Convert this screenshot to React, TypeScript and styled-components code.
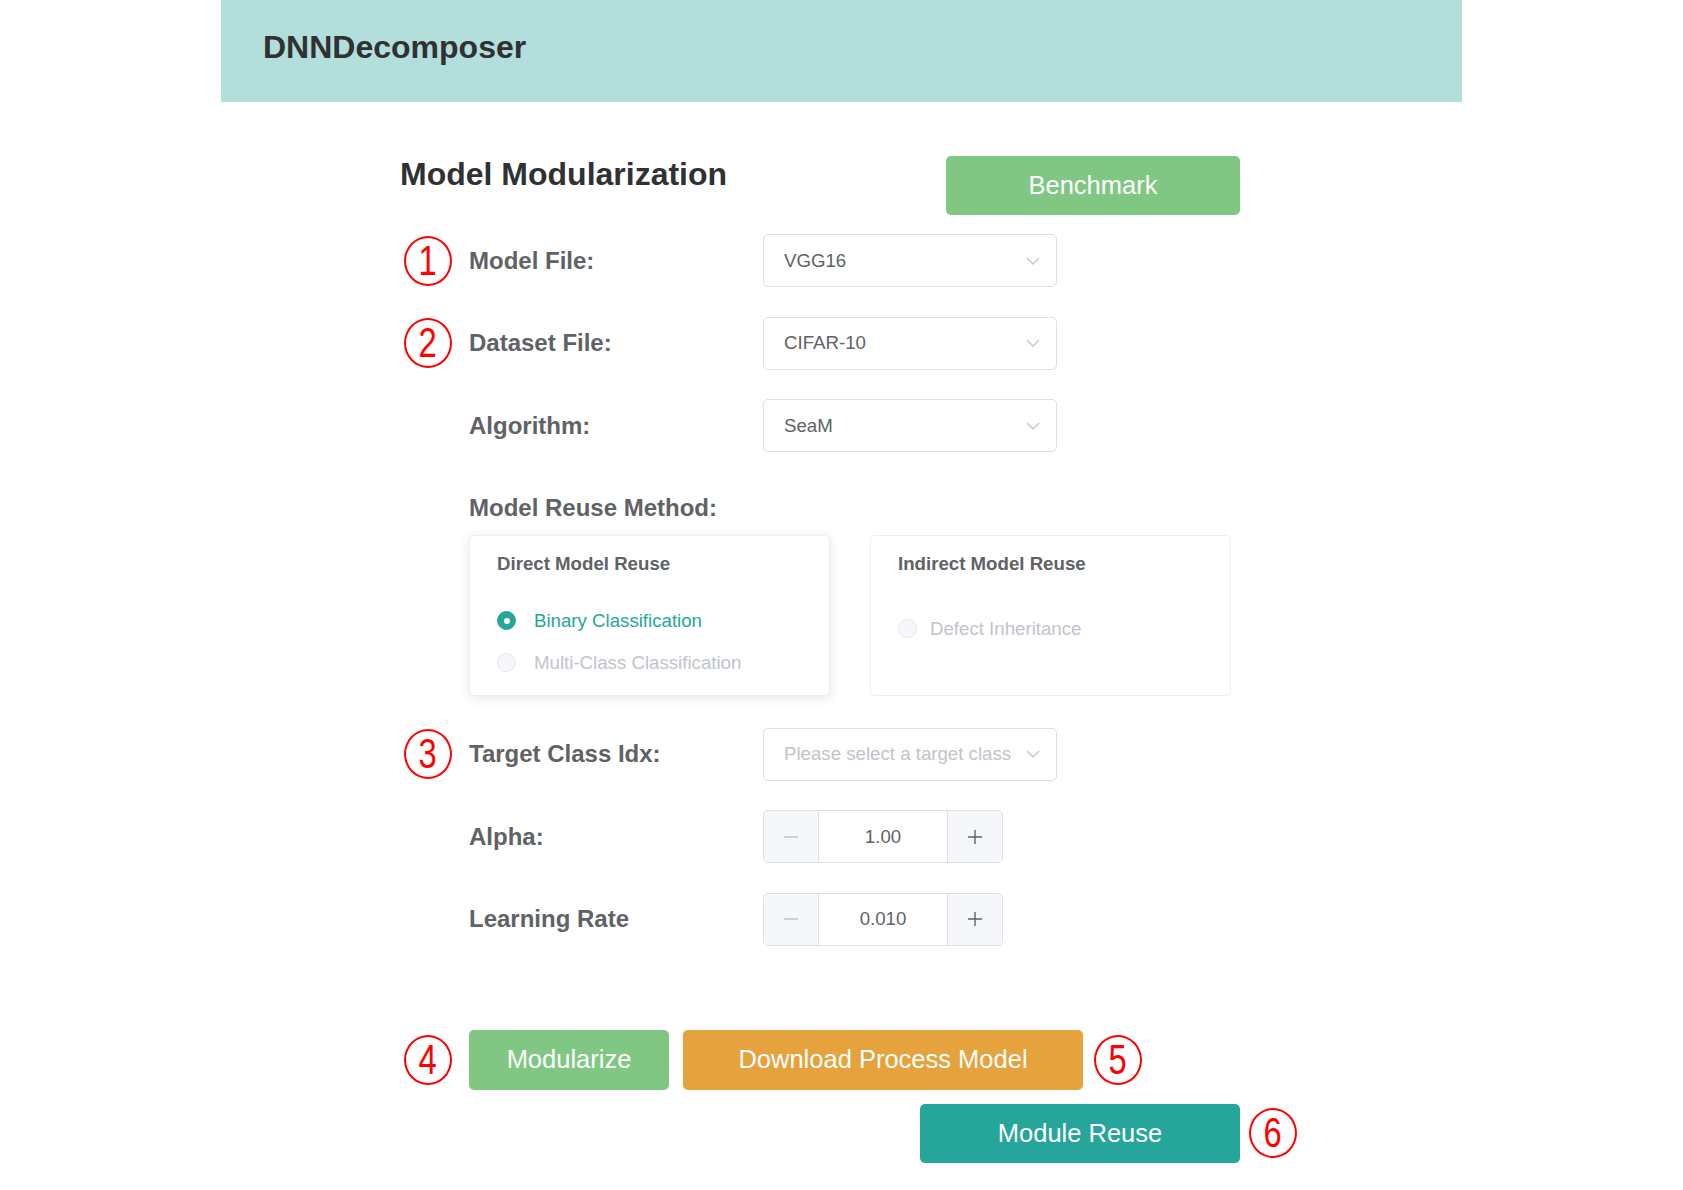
import React from "react";

import styled, {
  createGlobalStyle,
  css
} from "styled-components";

type Tone = "green" | "orange" | "teal";

const TONES: Record<Tone, string> = {
  green: "#81c784",
  orange: "#e6a23c",
  teal: "#26a69a"
};

const GlobalStyle = createGlobalStyle`
  html, body {
    margin: 0;
    padding: 0;
    background: #fff;
  }

  body {
    font-family: "Liberation Sans", Arial, sans-serif;
  }
`;

const ScPage = styled.div`
  width: 1241px;
  margin: 0 auto;
`;

const ScHeader = styled.header`
  height: 102px;
  box-sizing: border-box;
  padding: 0 0 8px 42px;
  display: flex;
  align-items: center;
  background: #b2dfdb;
  color: #303133;
  font-size: 32px;
  font-weight: 700;
`;

const ScMain = styled.main`
  width: 840px;
  margin: 54px 0 0 179px;
`;

const ScTitleRow = styled.div`
  display: flex;
  justify-content: space-between;
  align-items: flex-start;
  margin-bottom: 19px;
`;

const ScTitle = styled.h2`
  margin: 0;
  color: #303133;
  font-size: 32px;
  line-height: 36px;
  font-weight: 700;
`;

const ScButton = styled.button<{ $tone: Tone; $width: number; $height?: number }>`
  width: ${props => props.$width}px;
  height: ${props => props.$height || 60}px;
  flex: none;
  border: 0;
  border-radius: 5px;
  background: ${props => TONES[props.$tone]};
  color: #fff;
  font-family: inherit;
  font-size: 25.5px;
  cursor: pointer;
`;

const ScRow = styled.div<{ $flush?: boolean }>`
  display: flex;
  align-items: center;
  height: 53px;
  margin-bottom: ${props => (props.$flush ? 0 : 29.5)}px;
`;

const ScGutter = styled.div`
  width: 69px;
  flex: none;
  display: flex;
  align-items: center;
`;

const ScMark = styled.span<{ $gap?: number }>`
  width: 44px;
  height: 46px;
  flex: none;
  margin-left: ${props => props.$gap ?? 4}px;
  border: 2px solid #f00;
  border-radius: 50%;
  display: flex;
  align-items: center;
  justify-content: center;
  color: #f00;
  font-size: 42px;
  line-height: 1;

  span {
    display: inline-block;
    transform: scaleX(0.78);
  }
`;

const ScLabel = styled.label`
  width: 294px;
  flex: none;
  color: #606266;
  font-size: 24px;
  font-weight: 700;
`;

const ScSelect = styled.div<{ $placeholder?: boolean }>`
  width: 294px;
  height: 53px;
  box-sizing: border-box;
  padding: 0 16px 0 20px;
  display: flex;
  align-items: center;
  justify-content: space-between;
  border: 1px solid #dcdfe6;
  border-radius: 5px;
  color: ${props => (props.$placeholder ? "#c0c4cc" : "#606266")};
  font-size: 18.67px;
`;

const ScNumber = styled.div`
  width: 240px;
  height: 53px;
  box-sizing: border-box;
  display: flex;
  border: 1px solid #dcdfe6;
  border-radius: 5px;
  overflow: hidden;
`;

const ScStep = styled.span<{ $disabled?: boolean; $side: "left" | "right" }>`
  width: 54px;
  flex: none;
  display: flex;
  align-items: center;
  justify-content: center;
  background: #f5f7fa;
  color: ${props => (props.$disabled ? "#c0c4cc" : "#606266")};
  ${props => (props.$side === "left" ? css`
    border-right: 1px solid #dcdfe6;
  ` : css`
    border-left: 1px solid #dcdfe6;
  `)}
`;

const ScValue = styled.span`
  flex: 1;
  display: flex;
  align-items: center;
  justify-content: center;
  color: #606266;
  font-size: 18.67px;
`;

const ScCards = styled.div`
  display: flex;
  gap: 40px;
  margin: 0 0 32px 69px;
`;

const ScCard = styled.div<{ $shadow?: boolean }>`
  width: 361px;
  height: 161px;
  box-sizing: border-box;
  padding: 18px 27px;
  border: 1px solid #ebeef5;
  border-radius: 5px;
  background: #fff;
  box-shadow: ${props => (props.$shadow ? "0 2px 12px 0 rgba(0, 0, 0, 0.1)" : "none")};
`;

const ScCardTitle = styled.div`
  color: #606266;
  font-size: 18.67px;
  line-height: 20px;
  font-weight: 700;
`;

const ScRadioGroup = styled.div<{ $offset: number }>`
  margin-top: ${props => props.$offset}px;
  display: flex;
  flex-direction: column;
`;

const ScRadio = styled.label<{ $checked?: boolean; $gap?: number }>`
  height: 42px;
  display: flex;
  align-items: center;
  gap: ${props => props.$gap ?? 18}px;
  color: ${props => (props.$checked ? "#26a69a" : "#c0c4cc")};
  font-size: 18.67px;
`;

const ScRadioDot = styled.span<{ $checked?: boolean }>`
  width: 19px;
  height: 19px;
  box-sizing: border-box;
  flex: none;
  border-radius: 50%;
  display: flex;
  align-items: center;
  justify-content: center;
  ${props => (props.$checked ? css`
    border: 1px solid #26a69a;
    background: #26a69a;

    &::after {
      content: "";
      width: 6px;
      height: 6px;
      border-radius: 50%;
      background: #fff;
    }
  ` : css`
    border: 1px solid #e4e7ed;
    background: #f5f7fa;
  `)}
`;

const ScActions = styled.div<{ $top: number }>`
  display: flex;
  align-items: center;
  margin-top: ${props => props.$top}px;
`;

const ScActionGap = styled.span<{ $w: number }>`
  width: ${props => props.$w}px;
  flex: none;
`;

function Mark({
  n,
  gap
}: { n: number; gap?: number }): React.ReactElement {
  return <ScMark $gap={gap}><span>{n}</span></ScMark>;
}

function Chevron(): React.ReactElement {
  return <svg width="14" height="8" viewBox="0 0 14 8">
    <polyline points="1,1 7,7 13,1" fill="none" stroke="#c0c4cc" strokeWidth="1.3" />
  </svg>;
}

function Select({
  value,
  placeholder
}: { value?: string; placeholder?: string }): React.ReactElement {
  return <ScSelect $placeholder={!value}>
    <span>{value || placeholder}</span>
    <Chevron />
  </ScSelect>;
}

function NumberInput({
  value
}: { value: string }): React.ReactElement {
  return <ScNumber>
    <ScStep $side="left" $disabled>
      <svg width="16" height="16" viewBox="0 0 16 16">
        <line x1="1" y1="8" x2="15" y2="8" stroke="currentColor" strokeWidth="1.4" />
      </svg>
    </ScStep>
    <ScValue>{value}</ScValue>
    <ScStep $side="right">
      <svg width="16" height="16" viewBox="0 0 16 16">
        <line x1="1" y1="8" x2="15" y2="8" stroke="currentColor" strokeWidth="1.4" />
        <line x1="8" y1="1" x2="8" y2="15" stroke="currentColor" strokeWidth="1.4" />
      </svg>
    </ScStep>
  </ScNumber>;
}

const FIELDS = [
  { mark: 1, label: "Model File:", value: "VGG16" },
  { mark: 2, label: "Dataset File:", value: "CIFAR-10" },
  { mark: 0, label: "Algorithm:", value: "SeaM" }
];

export default function App(): React.ReactElement {
  return <>
    <GlobalStyle />
    <ScPage>
      <ScHeader>DNNDecomposer</ScHeader>

      <ScMain>
        <ScTitleRow>
          <ScTitle>Model Modularization</ScTitle>
          <ScButton $tone="green" $width={294} $height={59}>Benchmark</ScButton>
        </ScTitleRow>

        {FIELDS.map(({ mark, label, value }) => <ScRow key={label}>
          <ScGutter>{mark ? <Mark n={mark} /> : null}</ScGutter>
          <ScLabel>{label}</ScLabel>
          <Select value={value} />
        </ScRow>)}

        <ScRow $flush>
          <ScGutter />
          <ScLabel>Model Reuse Method:</ScLabel>
        </ScRow>

        <ScCards>
          <ScCard $shadow>
            <ScCardTitle>Direct Model Reuse</ScCardTitle>
            <ScRadioGroup $offset={26}>
              <ScRadio $checked>
                <ScRadioDot $checked />
                Binary Classification
              </ScRadio>
              <ScRadio>
                <ScRadioDot />
                Multi-Class Classification
              </ScRadio>
            </ScRadioGroup>
          </ScCard>

          <ScCard>
            <ScCardTitle>Indirect Model Reuse</ScCardTitle>
            <ScRadioGroup $offset={34}>
              <ScRadio $gap={13}>
                <ScRadioDot />
                Defect Inheritance
              </ScRadio>
            </ScRadioGroup>
          </ScCard>
        </ScCards>

        <ScRow>
          <ScGutter><Mark n={3} /></ScGutter>
          <ScLabel>Target Class Idx:</ScLabel>
          <Select placeholder="Please select a target class" />
        </ScRow>

        <ScRow>
          <ScGutter />
          <ScLabel>Alpha:</ScLabel>
          <NumberInput value="1.00" />
        </ScRow>

        <ScRow $flush>
          <ScGutter />
          <ScLabel>Learning Rate</ScLabel>
          <NumberInput value="0.010" />
        </ScRow>

        <ScActions $top={84}>
          <ScGutter><Mark n={4} /></ScGutter>
          <ScButton $tone="green" $width={200}>Modularize</ScButton>
          <ScActionGap $w={14} />
          <ScButton $tone="orange" $width={400}>Download Process Model</ScButton>
          <Mark n={5} gap={11} />
        </ScActions>

        <ScActions $top={14}>
          <ScGutter />
          <ScActionGap $w={451} />
          <ScButton $tone="teal" $width={320} $height={59}>Module Reuse</ScButton>
          <Mark n={6} gap={9} />
        </ScActions>
      </ScMain>
    </ScPage>
  </>;
}
